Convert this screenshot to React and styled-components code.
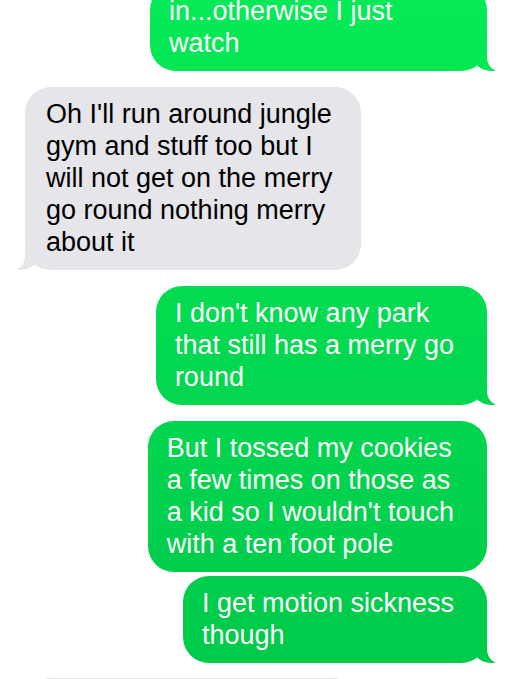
import React from "react";
import styled, { createGlobalStyle, css } from "styled-components";

const Global = createGlobalStyle`
  html, body { margin: 0; padding: 0; background: #ffffff; }
  body { width: 512px; height: 679px; overflow: hidden; }
`;

const GREEN = "linear-gradient(to bottom, #05ea56 0px, #00c94a 679px)";
const GRAY = "#e5e5ea";

const Thread = styled.div`
  display: flex;
  flex-direction: column;
  gap: 16px;
  margin-top: -16px;
  padding: 0 25px;
  font-family: "Liberation Sans", Arial, sans-serif;
`;

const Group = styled.div`
  display: flex;
  flex-direction: column;
  gap: 4px;
  margin-top: ${(p) => (p.$pull ? "-1px" : "0")};
  align-items: ${(p) => (p.$me ? "flex-end" : "flex-start")};
`;

const sentTail = css`
  &::before {
    content: "";
    position: absolute;
    bottom: 0;
    right: -8px;
    width: 22px;
    height: 24px;
    background: ${GREEN};
    background-attachment: fixed;
    border-bottom-left-radius: 18px 15px;
  }
  &::after {
    content: "";
    position: absolute;
    bottom: 0;
    right: -12px;
    width: 12px;
    height: 24px;
    background: #ffffff;
    border-bottom-left-radius: 12px 14px;
  }
`;

const receivedTail = css`
  &::before {
    content: "";
    position: absolute;
    bottom: 0;
    left: -8px;
    width: 22px;
    height: 24px;
    background: ${GRAY};
    border-bottom-right-radius: 18px 15px;
  }
  &::after {
    content: "";
    position: absolute;
    bottom: 0;
    left: -12px;
    width: 12px;
    height: 24px;
    background: #ffffff;
    border-bottom-right-radius: 12px 14px;
  }
`;

const Bubble = styled.div`
  position: relative;
  box-sizing: border-box;
  white-space: pre-line;
  font-size: 27px;
  line-height: 32px;
  border-radius: 26px;
  padding: ${(p) => (p.$me ? "11px 33px 12px 19px" : "11px 28px 12px 21px")};
  color: ${(p) => (p.$me ? "#ffffff" : "#000000")};
  background: ${(p) => (p.$me ? GREEN : GRAY)};
  background-attachment: ${(p) => (p.$me ? "fixed" : "scroll")};
  width: ${(p) => (p.$w ? `${p.$w}px` : "auto")};
  min-height: ${(p) => (p.$h ? `${p.$h}px` : "0")};
  ${(p) => (p.$tail ? (p.$me ? sentTail : receivedTail) : "")}
`;

export default function App() {
  return (
    <>
      <Global />
      <Thread>
        <Group $me>
          <Bubble $me $tail $w={337}>{"in...otherwise I just\nwatch"}</Bubble>
        </Group>
        <Group>
          <Bubble $tail>
            {"Oh I'll run around jungle\ngym and stuff too but I\nwill not get on the merry\ngo round nothing merry\nabout it"}
          </Bubble>
        </Group>
        <Group $me>
          <Bubble $me $tail>
            {"I don't know any park\nthat still has a merry go\nround"}
          </Bubble>
        </Group>
        <Group $me>
          <Bubble $me>
            {"But I tossed my cookies\na few times on those as\na kid so I wouldn't touch\nwith a ten foot pole"}
          </Bubble>
          <Bubble $me $tail>{"I get motion sickness\nthough"}</Bubble>
        </Group>
        <Group $pull>
          <Bubble $w={334} $h={60} aria-hidden="true" />
        </Group>
      </Thread>
    </>
  );
}
